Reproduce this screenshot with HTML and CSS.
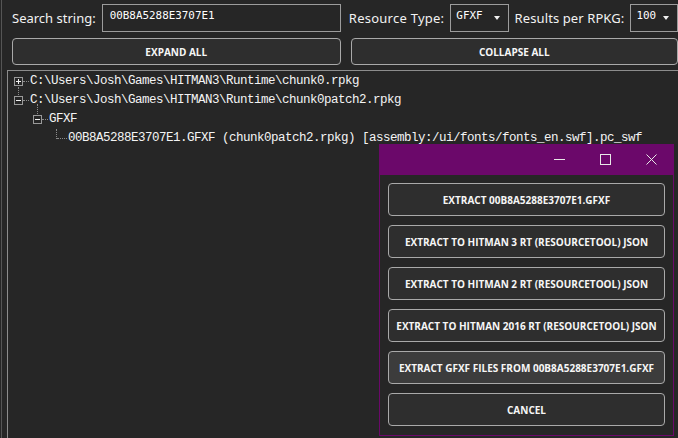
FILE: index.html
```html
<!DOCTYPE html>
<html>
<head>
<meta charset="utf-8">
<link rel="stylesheet" href="styles.css">
</head>
<body>
<div class="app">
  <div class="toolbar">
    <label class="lbl lbl-ss">Search string:</label>
    <div class="input">00B8A5288E3707E1</div>
    <label class="lbl lbl-rt">Resource Type:</label>
    <div class="combo combo-rt"><span>GFXF</span><i class="caret"></i></div>
    <label class="lbl lbl-rp">Results per RPKG:</label>
    <div class="combo combo-rp"><span>100</span><i class="caret"></i></div>
  </div>
  <div class="actions">
    <button class="btn btn-expand">EXPAND ALL</button>
    <button class="btn btn-collapse">COLLAPSE ALL</button>
  </div>
  <div class="tree">
    <div class="row lvl0 first">
      <span class="exp"><svg width="9" height="9" viewBox="0 0 9 9"><rect x="0.5" y="0.5" width="8" height="8" fill="#262626" stroke="#9a9a9a"/><path d="M2 4.5h5M4.5 2v5" stroke="#f0f0f0"/></svg></span>
      <span class="hdots"></span>
      <span class="txt">C:\Users\Josh\Games\HITMAN3\Runtime\chunk0.rpkg</span>
    </div>
    <div class="row lvl0 second">
      <span class="exp"><svg width="9" height="9" viewBox="0 0 9 9"><rect x="0.5" y="0.5" width="8" height="8" fill="#262626" stroke="#9a9a9a"/><path d="M2 4.5h5" stroke="#f0f0f0"/></svg></span>
      <span class="hdots"></span>
      <span class="txt">C:\Users\Josh\Games\HITMAN3\Runtime\chunk0patch2.rpkg</span>
    </div>
    <div class="row lvl1 child">
      <span class="exp"><svg width="9" height="9" viewBox="0 0 9 9"><rect x="0.5" y="0.5" width="8" height="8" fill="#262626" stroke="#9a9a9a"/><path d="M2 4.5h5" stroke="#f0f0f0"/></svg></span>
      <span class="hdots"></span>
      <span class="txt">GFXF</span>
    </div>
    <div class="row lvl2 leafrow">
      <span class="leaf"></span>
      <span class="txt">00B8A5288E3707E1.GFXF (chunk0patch2.rpkg) [assembly:/ui/fonts/fonts_en.swf].pc_swf</span>
    </div>
  </div>

  <div class="dialog">
    <div class="titlebar">
      <span class="cap"><svg width="11" height="11" viewBox="0 0 11 11"><path d="M0 5.5h11" stroke="#e8e8e8"/></svg></span>
      <span class="cap"><svg width="11" height="11" viewBox="0 0 11 11"><rect x="0.5" y="0.5" width="10" height="10" fill="none" stroke="#e8e8e8"/></svg></span>
      <span class="cap"><svg width="11" height="11" viewBox="0 0 11 11"><path d="M0.5 0.5l10 10M10.5 0.5l-10 10" stroke="#e8e8e8"/></svg></span>
    </div>
    <div class="dbody">
      <button class="btn dbtn">EXTRACT 00B8A5288E3707E1.GFXF</button>
      <button class="btn dbtn">EXTRACT TO HITMAN 3 RT (RESOURCETOOL) JSON</button>
      <button class="btn dbtn">EXTRACT TO HITMAN 2 RT (RESOURCETOOL) JSON</button>
      <button class="btn dbtn">EXTRACT TO HITMAN 2016 RT (RESOURCETOOL) JSON</button>
      <button class="btn dbtn hover">EXTRACT GFXF FILES FROM 00B8A5288E3707E1.GFXF</button>
      <button class="btn dbtn">CANCEL</button>
    </div>
  </div>
</div>
</body>
</html>
```

FILE: styles.css
```css
* { box-sizing: border-box; }
html, body {
  margin: 0;
  padding: 0;
  background: #262626;
  width: 678px;
  height: 438px;
  overflow: hidden;
}
body {
  font-family: "Noto Sans", "Open Sans", sans-serif;
  color: #f2f2f2;
}
.app {
  position: relative;
  height: 438px;
  overflow: hidden;
  margin-left: 1px;
  border-left: 1px solid #555;
  padding-top: 4px;
}
.toolbar {
  display: flex;
  align-items: center;
  height: 28px;
  padding-left: 10px;
}
.lbl {
  font-size: 13px;
  color: #f2f2f2;
  white-space: nowrap;
}
.input {
  margin-left: 6px;
  width: 247px;
  height: 28px;
  border: 1px solid #9c9c9c;
  padding: 4px 0 0 7px;
  font-family: "DejaVu Sans Mono", monospace;
  font-size: 10.9px;
  color: #fff;
}
.lbl-rt { margin-left: 8px; letter-spacing: 0.25px; }
.lbl-rp { margin-left: 6px; letter-spacing: 0.1px; }
.combo {
  position: relative;
  height: 28px;
  border: 1px solid #9c9c9c;
  margin-left: 6px;
  padding: 4px 0 0 5px;
  font-family: "DejaVu Sans Mono", monospace;
  font-size: 10.9px;
  color: #fff;
}
.combo-rt { width: 60px; }
.combo-rp { width: 49px; }
.caret {
  position: absolute;
  right: 8px;
  top: 11px;
  width: 0; height: 0;
  border-left: 3px solid transparent;
  border-right: 3px solid transparent;
  border-top: 4px solid #f0f0f0;
}
.actions {
  display: flex;
  gap: 10px;
  padding-left: 10px;
  margin-top: 6px;
}
.btn {
  font-family: "Open Sans", "Noto Sans", sans-serif;
  font-weight: 700;
  font-size: 10px;
  color: #f6f6f6;
  background: #2e2e2e;
  border: 1px solid #a9a9a9;
  border-radius: 4px;
  padding: 0;
  white-space: nowrap;
}
.btn-expand { width: 329px; height: 27px; }
.btn-collapse { width: 328px; height: 27px; }
.tree {
  margin-top: 5px;
  margin-left: 5px;
  width: 700px;
  height: 400px;
  border: 1px solid #8c8c8c;
  padding-top: 1px;
}
.row {
  position: relative;
  display: flex;
  align-items: center;
  height: 19px;
  font-family: "Liberation Mono", "DejaVu Sans Mono", monospace;
  font-size: 12.5px;
  letter-spacing: -0.5px;
  color: #f4f4f4;
  white-space: nowrap;
}
.txt {
  display: block;
  line-height: 19px;
  height: 19px;
}
.lvl0 { padding-left: 6px; }
.lvl1 { padding-left: 25px; }
.lvl2 { padding-left: 44px; }
.exp {
  position: relative;
  display: block;
  width: 9px;
  height: 9px;
}
.exp svg { display: block; }
.hdots {
  width: 6px;
  margin-right: 1px;
  border-bottom: 1px dotted #8a8a8a;
}
.first .exp::after {
  content: "";
  position: absolute;
  left: 4px;
  top: 10px;
  height: 10px;
  border-left: 1px dotted #8a8a8a;
}
.child .exp::before {
  content: "";
  position: absolute;
  left: 4px;
  bottom: 10px;
  height: 10px;
  border-left: 1px dotted #8a8a8a;
}
.leaf {
  position: relative;
  width: 12px;
  height: 19px;
  margin-left: 4px;
}
.leaf::before {
  content: "";
  position: absolute;
  left: 0;
  top: 0;
  height: 10px;
  border-left: 1px dotted #8a8a8a;
}
.leaf::after {
  content: "";
  position: absolute;
  left: 1px;
  top: 9px;
  width: 10px;
  border-bottom: 1px dotted #8a8a8a;
}
.dialog {
  position: absolute;
  left: 377px;
  top: 144px;
  width: 295px;
  height: 292px;
  display: flex;
  flex-direction: column;
}
.titlebar {
  height: 31px;
  background: #6b086a;
  display: flex;
  justify-content: flex-end;
  align-items: center;
}
.cap {
  width: 46px;
  height: 31px;
  display: flex;
  align-items: center;
  justify-content: center;
}
.cap svg { display: block; }
.dbody {
  flex: 1;
  background: #262626;
  border: 1px solid #6b086a;
  border-top: none;
  padding: 8px 8px 0 8px;
  display: flex;
  flex-direction: column;
  gap: 9px;
}
.dbtn {
  width: 277px;
  height: 33px;
}
.dbtn.hover { background: #3c3c3c; }
```
